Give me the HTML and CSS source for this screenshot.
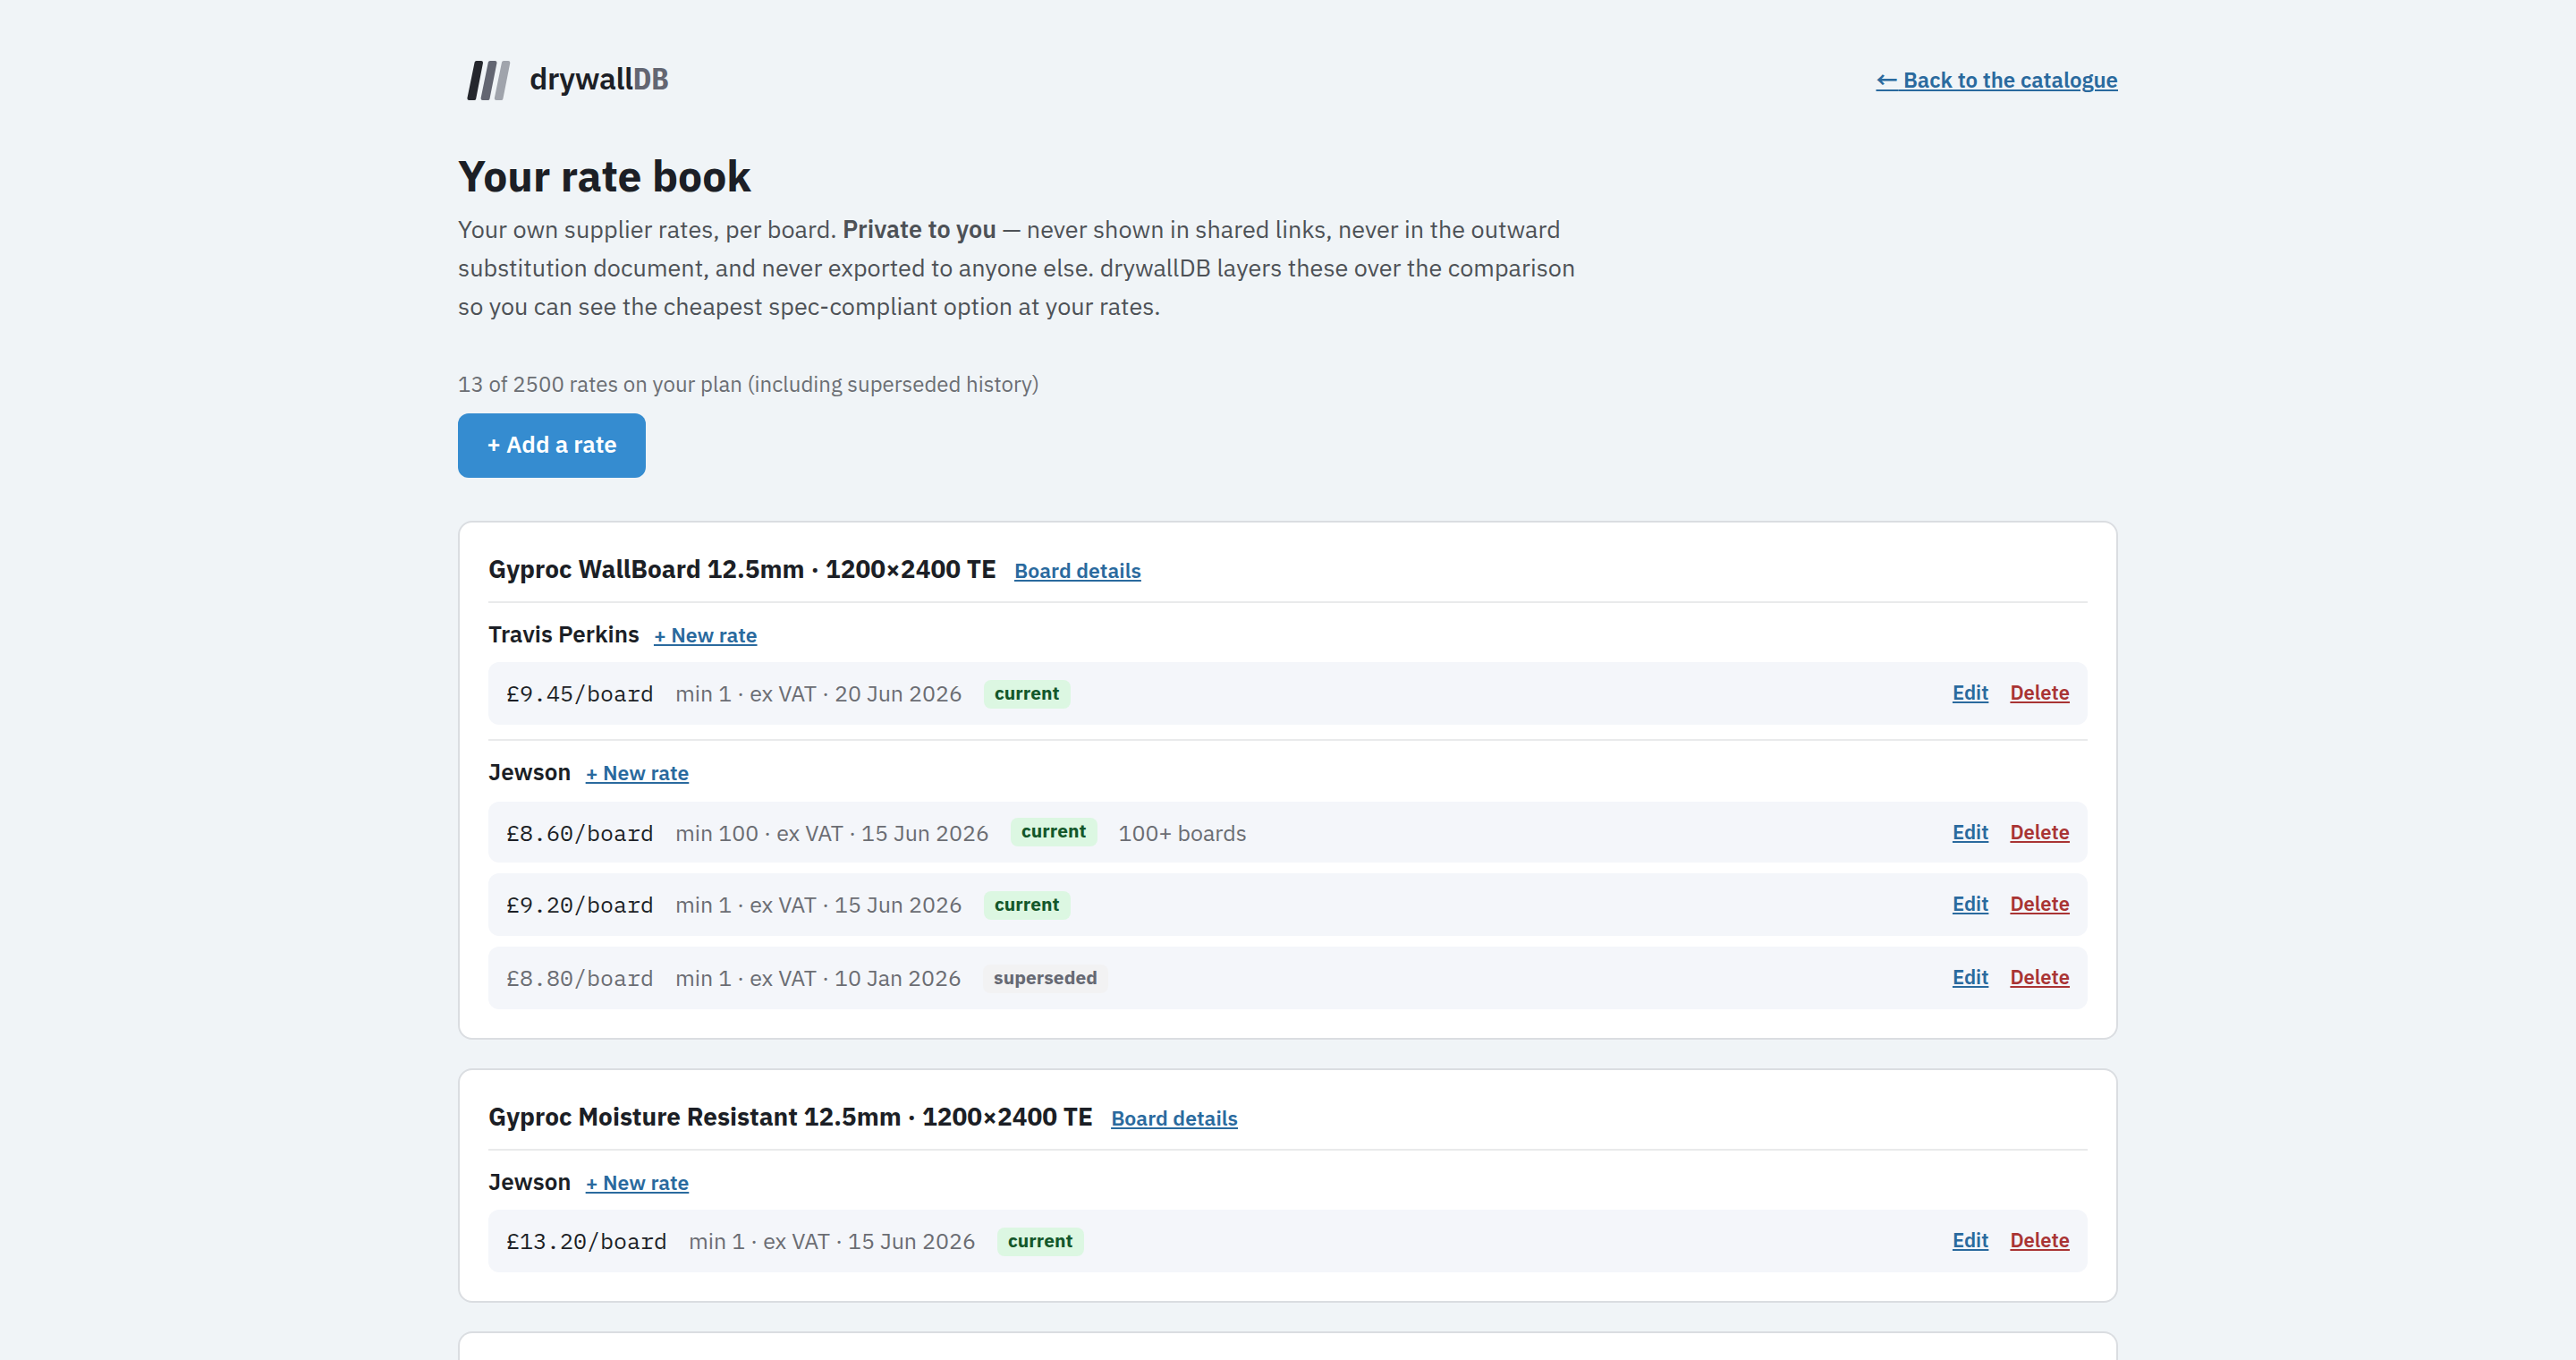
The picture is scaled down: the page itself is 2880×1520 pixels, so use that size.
FILE: index.html
```html
<!DOCTYPE html>
<html lang="en">
<head>
<meta charset="utf-8">
<title>Your rate book · drywallDB</title>
<link rel="stylesheet" href="styles.css">
</head>
<body>
<div class="page">
  <header class="topbar">
    <div class="brand">
      <svg class="brand-mark" viewBox="0 0 64 64" aria-hidden="true">
        <g stroke-width="4" stroke-linejoin="round">
          <path d="M20.6 12H26L18.2 52H12.4Z" fill="#25272d" stroke="#25272d"/>
          <path d="M35.8 12H41.5L33.5 52H27.6Z" fill="#636672" stroke="#636672"/>
          <path d="M51 12H56.3L48.4 52H42.8Z" fill="#a0a4ac" stroke="#a0a4ac"/>
        </g>
      </svg>
      <span class="brand-name">drywall<span class="brand-db">DB</span></span>
    </div>
    <a class="link back"><span class="arrow">←</span> Back to the catalogue</a>
  </header>

  <h1>Your rate book</h1>
  <p class="lead">Your own supplier rates, per board. <strong>Private to you</strong> — never shown in shared links, never in the outward substitution document, and never exported to anyone else. drywallDB layers these over the comparison so you can see the cheapest spec-compliant option at your rates.</p>
  <p class="usage">13 of 2500 rates on your plan (including superseded history)</p>
  <button class="add" type="button">+ Add a rate</button>

  <main class="boards">
    <section class="card">
      <div class="card-head"><h2>Gyproc WallBoard 12.5mm · 1200×2400 TE</h2><a class="link">Board details</a></div>
      <div class="supplier">
        <div class="supplier-head"><h3>Travis Perkins</h3><a class="link">+ New rate</a></div>
        <ul class="rates">
          <li class="rate"><span class="price">£9.45/board</span><span class="meta">min 1 · ex VAT · 20 Jun 2026</span><span class="badge">current</span><span class="actions"><a class="link">Edit</a><a class="link danger">Delete</a></span></li>
        </ul>
      </div>
      <div class="supplier">
        <div class="supplier-head"><h3>Jewson</h3><a class="link">+ New rate</a></div>
        <ul class="rates">
          <li class="rate compact"><span class="price">£8.60/board</span><span class="meta">min 100 · ex VAT · 15 Jun 2026</span><span class="badge">current</span><span class="meta">100+ boards</span><span class="actions"><a class="link">Edit</a><a class="link danger">Delete</a></span></li>
          <li class="rate"><span class="price">£9.20/board</span><span class="meta">min 1 · ex VAT · 15 Jun 2026</span><span class="badge">current</span><span class="actions"><a class="link">Edit</a><a class="link danger">Delete</a></span></li>
          <li class="rate old"><span class="price">£8.80/board</span><span class="meta">min 1 · ex VAT · 10 Jan 2026</span><span class="badge">superseded</span><span class="actions"><a class="link">Edit</a><a class="link danger">Delete</a></span></li>
        </ul>
      </div>
    </section>

    <section class="card">
      <div class="card-head"><h2>Gyproc Moisture Resistant 12.5mm · 1200×2400 TE</h2><a class="link">Board details</a></div>
      <div class="supplier">
        <div class="supplier-head"><h3>Jewson</h3><a class="link">+ New rate</a></div>
        <ul class="rates">
          <li class="rate"><span class="price">£13.20/board</span><span class="meta">min 1 · ex VAT · 15 Jun 2026</span><span class="badge">current</span><span class="actions"><a class="link">Edit</a><a class="link danger">Delete</a></span></li>
        </ul>
      </div>
    </section>

    <section class="card next"></section>
  </main>
</div>
</body>
</html>
```
FILE: styles.css
```css
*{box-sizing:border-box;margin:0;padding:0}
body{
  background:#f0f4f7;
  color:#1c1f26;
  font-family:"IBM Plex Sans","Noto Sans CJK JP",sans-serif;
}
.page{width:1856px;margin:0 auto;padding-top:50px}

.topbar{display:flex;align-items:center;justify-content:space-between;height:80px}
.brand{display:flex;align-items:center;gap:16px}
.brand-mark{display:block;width:64px;height:64px}
.brand-name{font-size:34px;line-height:40px;font-weight:600;letter-spacing:-.34px;margin-bottom:7px}
.brand-db{font-family:"IBM Plex Mono","DejaVu Sans Mono",monospace;font-weight:700;color:#636672}

.link{
  color:#2a6a9e;
  font-size:23px;
  line-height:32px;
  font-weight:600;
  white-space:nowrap;
  text-decoration:underline;
  text-decoration-thickness:2px;
  text-underline-offset:2px;
}
.back{font-size:24px;margin-bottom:2px}
.arrow{font-family:"Noto Sans CJK JP",sans-serif;font-weight:700;line-height:1;letter-spacing:.8px}

h1{margin-top:38px;font-size:48px;line-height:56px;font-weight:700}
.lead{margin-top:10px;width:1280px;font-size:27px;line-height:43.2px;color:#4d5156}
.lead strong{font-weight:600}
.usage{margin-top:45.4px;font-size:24px;line-height:40px;color:#6b6e73}
.add{
  display:block;
  width:210px;
  height:72px;
  margin-top:13px;
  padding-bottom:4px;
  border:0;
  border-radius:12px;
  background:#358cd0;
  color:#fff;
  font:600 26px/40px "IBM Plex Sans","Noto Sans CJK JP",sans-serif;
}

.boards{display:flex;flex-direction:column;gap:32px;margin-top:48px}
.card{padding:0 32px 32px;border:2px solid #dadde1;border-radius:16px;background:#fff}
.card.next{height:32px;padding:0;border-bottom:0;border-radius:16px 16px 0 0}
.card-head{display:flex;align-items:baseline;gap:20px;height:88px;padding-top:31.5px}
h2{font-size:28px;line-height:40px;font-weight:700}
.supplier{border-top:2px solid #e9eaeb}
.supplier + .supplier{margin-top:16px}
.supplier-head{display:flex;align-items:baseline;gap:16px;height:66px;padding-top:18px}
.supplier + .supplier .supplier-head{height:68px}
h3{font-size:26px;line-height:32px;font-weight:600}

.rates{display:flex;flex-direction:column;gap:12px;list-style:none}
.rate{display:flex;align-items:center;gap:24px;height:70px;padding:0 20px;border-radius:12px;background:#f4f6fa}
.price{font-family:"IBM Plex Mono","Liberation Mono",monospace;font-size:25px;line-height:32px;padding-bottom:1px}
.meta{font-size:25px;line-height:32px;padding-bottom:1px;color:#6b6d73}
.badge{
  height:32px;
  margin-top:2px;
  padding:0 12px;
  border-radius:8px;
  background:#dcf7e2;
  color:#13572a;
  font-size:21px;
  line-height:28px;
  font-weight:700;
}
.actions{display:flex;gap:24px;margin-left:auto;padding-bottom:3px}
.actions .link{font-size:22px}
.actions .danger{color:#a93434}
.rate.compact{height:68px;padding-top:2px}
.compact .badge{margin-top:-2px}
.old .price{color:#6b6d73}
.old .badge{background:#f2f2f3;color:#666973}
```
